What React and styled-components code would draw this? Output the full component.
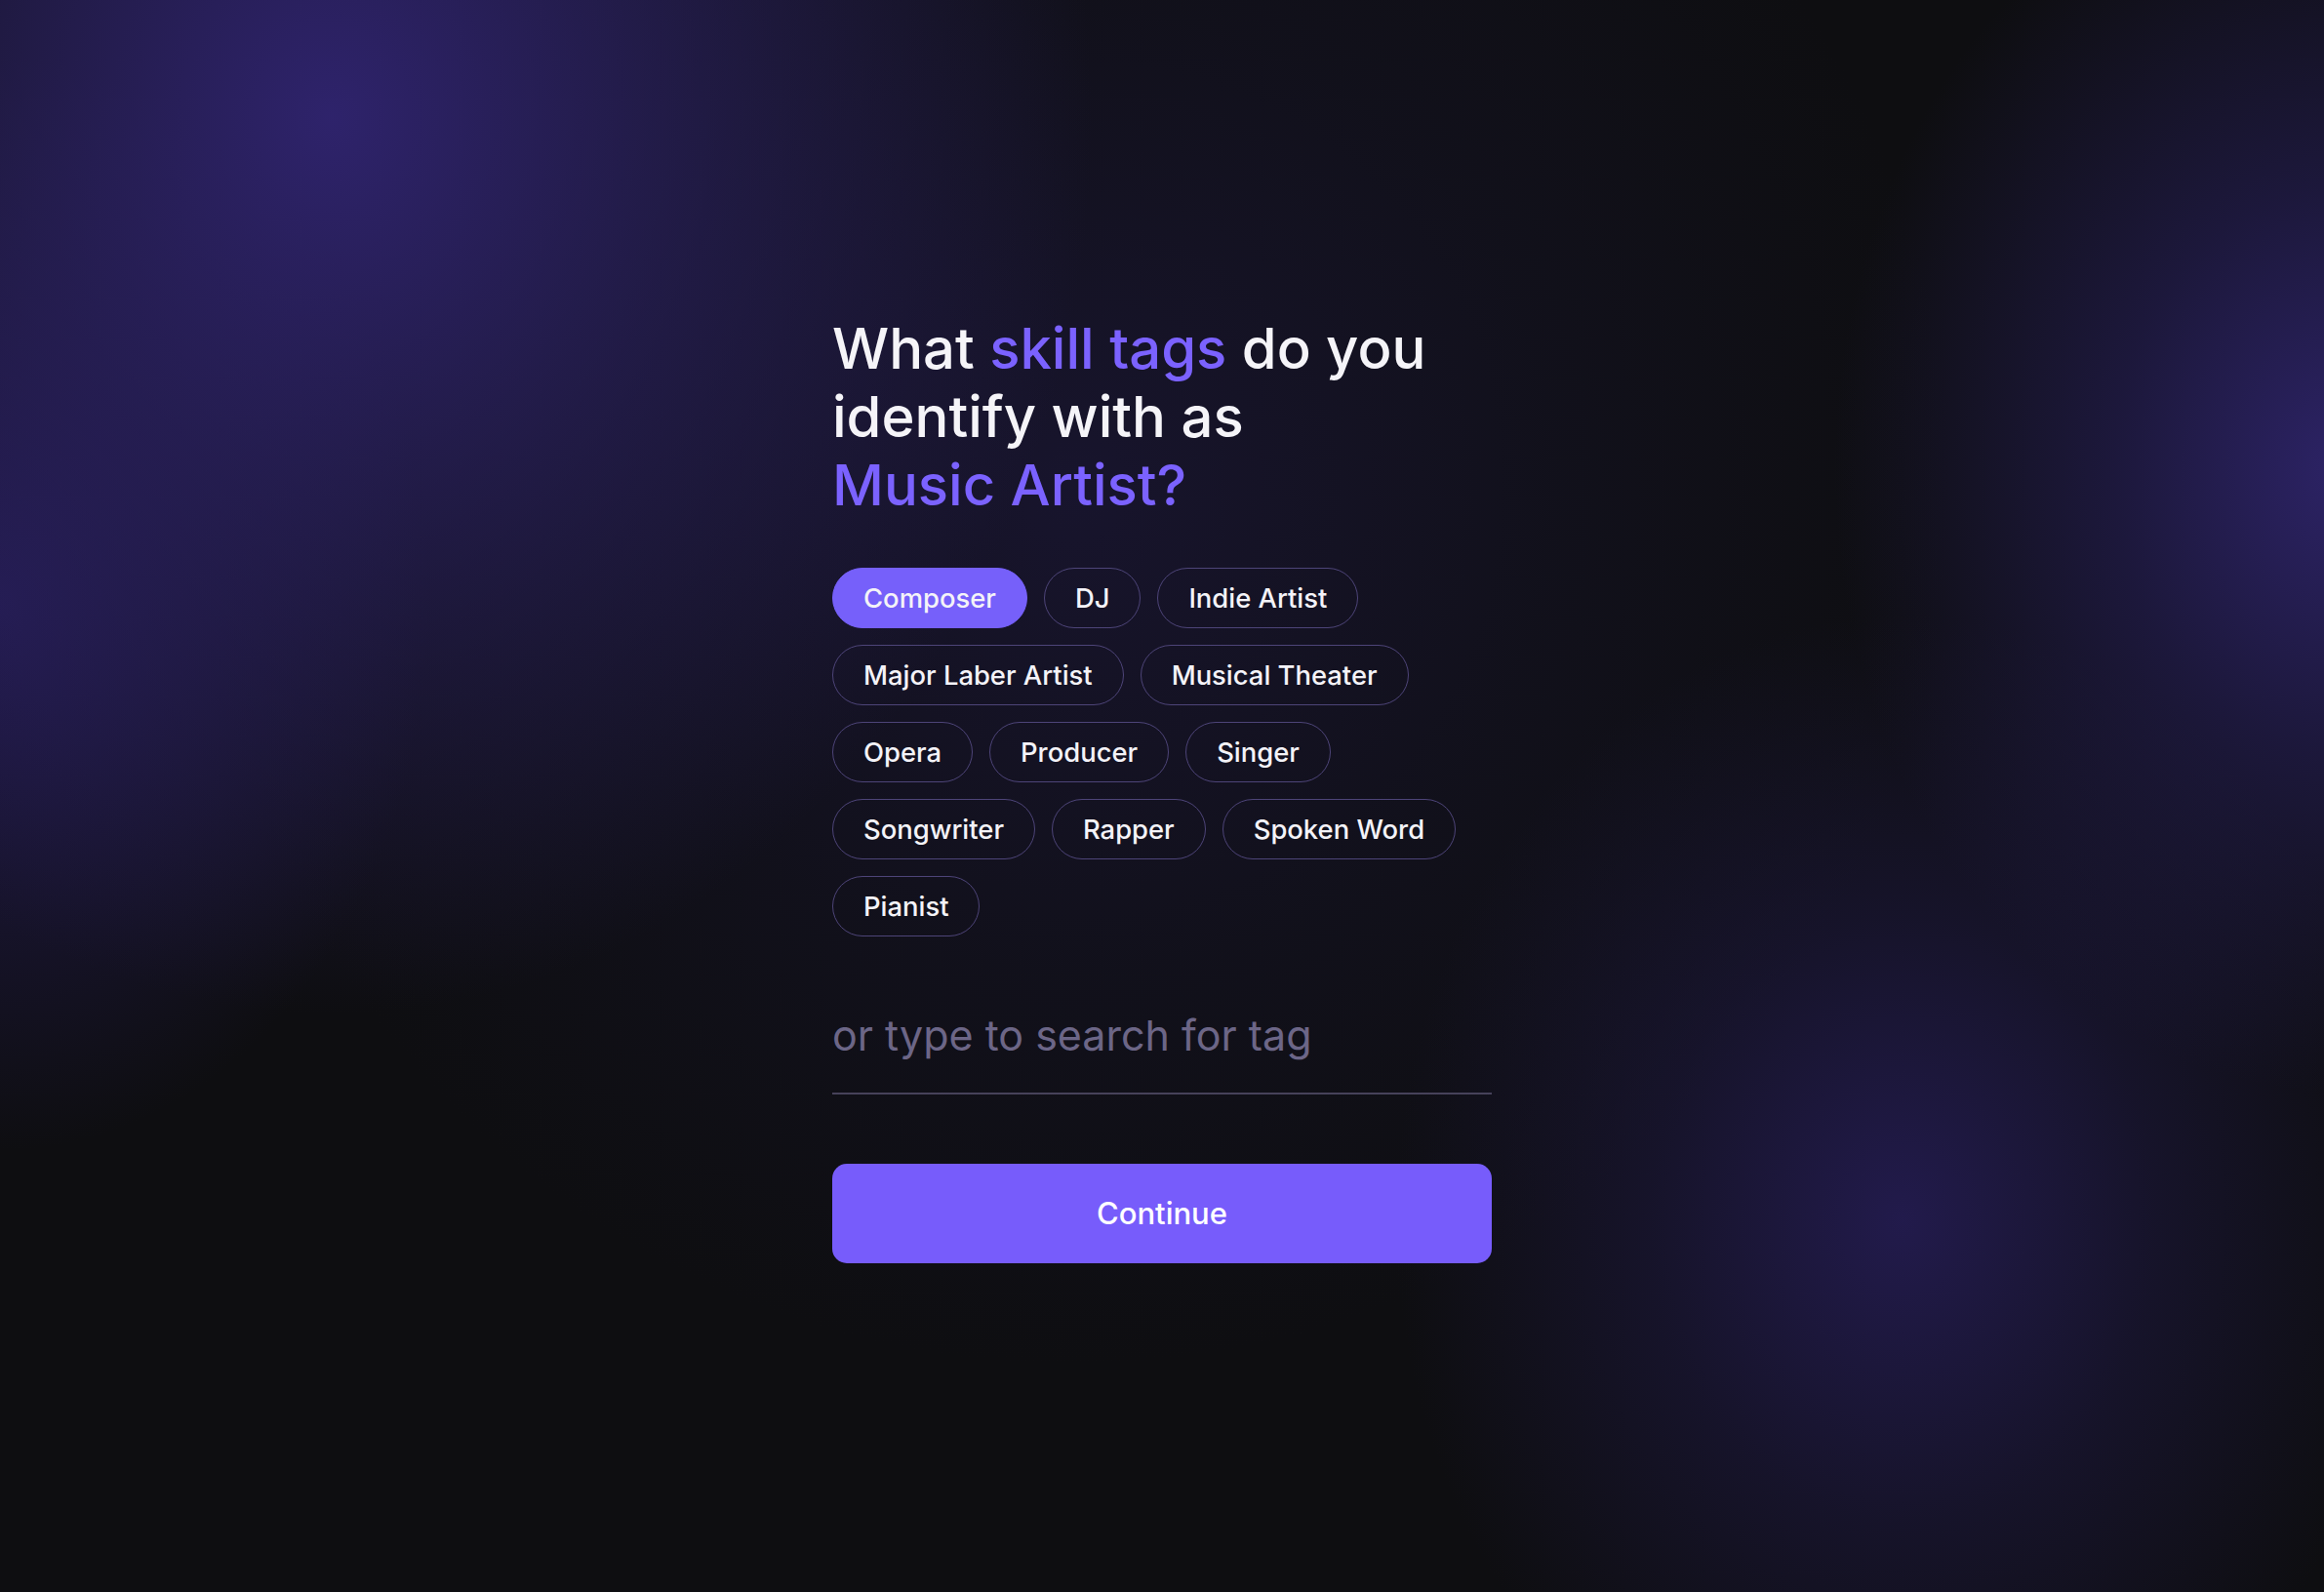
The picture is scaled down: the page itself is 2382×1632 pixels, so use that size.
import React, { useState } from "react";
import styled, { createGlobalStyle } from "styled-components";

const Global = createGlobalStyle`
  html, body { margin: 0; padding: 0; background: #0e0e11; }
  * { box-sizing: border-box; }
`;

const Page = styled.div`
  min-height: 100vh;
  width: 100%;
  display: flex;
  align-items: center;
  justify-content: center;
  font-family: Inter, "Noto Sans", sans-serif;
  background:
    radial-gradient(ellipse 780px 920px at 340px 120px, rgba(48, 36, 112, 0.95) 0%, rgba(44, 34, 100, 0.65) 40%, rgba(30, 24, 70, 0) 100%),
    radial-gradient(ellipse 440px 560px at 0px 620px, rgba(40, 30, 96, 0.75) 0%, rgba(30, 24, 70, 0) 100%),
    radial-gradient(ellipse 520px 640px at 2400px 480px, rgba(46, 36, 106, 0.95) 0%, rgba(40, 32, 94, 0.55) 45%, rgba(30, 24, 70, 0) 100%),
    radial-gradient(ellipse 520px 620px at 1950px 1250px, rgba(36, 28, 82, 0.9) 0%, rgba(32, 26, 72, 0.45) 50%, rgba(26, 22, 60, 0) 100%),
    radial-gradient(ellipse 900px 900px at 1100px 500px, rgba(26, 22, 52, 0.8) 0%, rgba(22, 20, 42, 0.4) 55%, rgba(14, 14, 17, 0) 100%),
    #0e0e11;
`;

const Panel = styled.div`
  width: 676px;
  display: flex;
  flex-direction: column;
  margin-bottom: 16px;
`;

const Heading = styled.h1`
  margin: 0;
  font-size: 58px;
  line-height: 70px;
  font-weight: 500;
  color: #f5f4f8;
  letter-spacing: 0;
`;

const Accent = styled.span`
  color: #7b62ff;
`;

const Tags = styled.div`
  margin-top: 50px;
  display: flex;
  flex-direction: column;
  gap: 17px;
`;

const TagRow = styled.div`
  display: flex;
  gap: 17px;
`;

const Tag = styled.button`
  height: 62px;
  padding: 0 31px;
  border-radius: 31px;
  border: 1.5px solid ${(p) => (p.$active ? "#7660fa" : "#4d4478")};
  background: ${(p) => (p.$active ? "#7660fa" : "transparent")};
  color: #f4f3f8;
  font-family: Inter, "Noto Sans", sans-serif;
  font-size: 27.4px;
  font-weight: 500;
  cursor: pointer;
  display: flex;
  align-items: center;
`;

const SearchField = styled.input`
  margin-top: 75px;
  width: 100%;
  background: transparent;
  border: none;
  border-bottom: 2px solid #46425a;
  padding: 0 0 33px 0;
  font-family: Inter, "Noto Sans", sans-serif;
  font-size: 43px;
  font-weight: 400;
  color: #f4f3f8;
  outline: none;
  &::placeholder { color: #6c6687; }
`;

const Continue = styled.button`
  margin-top: 71px;
  width: 100%;
  height: 102px;
  border: none;
  border-radius: 15px;
  background: #775cfb;
  color: #ffffff;
  font-family: Inter, "Noto Sans", sans-serif;
  font-size: 31px;
  font-weight: 500;
  cursor: pointer;
`;

const ROWS = [
  ["Composer", "DJ", "Indie Artist"],
  ["Major Laber Artist", "Musical Theater"],
  ["Opera", "Producer", "Singer"],
  ["Songwriter", "Rapper", "Spoken Word"],
  ["Pianist"],
];

export default function App() {
  const [sel] = useState("Composer");
  return (
    <Page>
      <Global />
      <Panel>
        <Heading>
          What <Accent>skill tags</Accent> do you
          <br />
          identify with as
          <br />
          <Accent>Music Artist?</Accent>
        </Heading>
        <Tags>
          {ROWS.map((row, i) => (
            <TagRow key={i}>
              {row.map((t) => (
                <Tag key={t} $active={t === sel}>
                  {t}
                </Tag>
              ))}
            </TagRow>
          ))}
        </Tags>
        <SearchField placeholder="or type to search for tag" />
        <Continue>Continue</Continue>
      </Panel>
    </Page>
  );
}
